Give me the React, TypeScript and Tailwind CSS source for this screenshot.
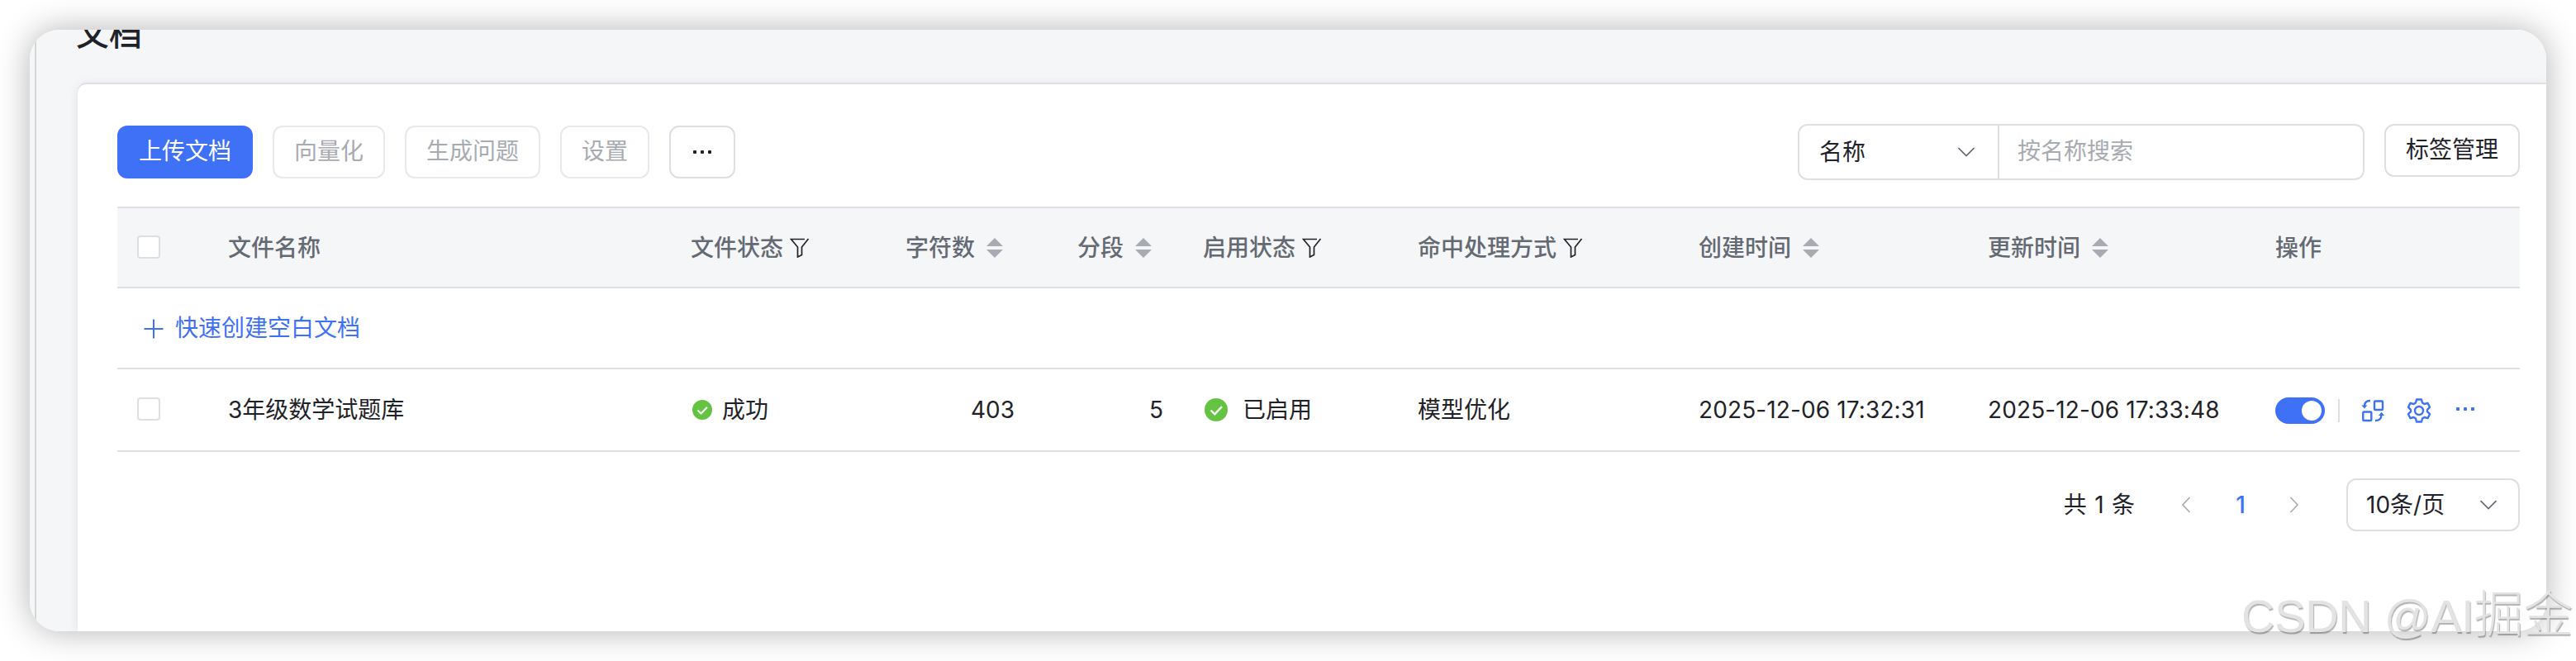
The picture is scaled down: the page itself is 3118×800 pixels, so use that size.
import type { ReactNode } from "react";

export default function App() {
  return (
    <div className="h-[800px] w-[3118px] overflow-hidden bg-white p-9 font-[Inter,'Noto_Sans_CJK_SC',sans-serif] text-[28px] leading-[44px] text-[#1f2329]">
      <div className="h-[728px] w-[3046px] rounded-[36px] shadow-[0_0_40px_rgba(0,0,0,0.3)]">
        <div className="flex h-full overflow-hidden rounded-[36px] bg-[#f5f6f8]">
          <div className="w-2 shrink-0 border-r-2 border-[#d5d6d8]" />
          <main className="flex min-w-0 flex-1 flex-col pl-[50px]">
            <h1 className="-mt-[25px] -ml-0.5 h-[91px] text-[40px] leading-[60px] font-medium">文档</h1>
            <section className="flex-1 rounded-tl-[10px] bg-white pt-12 pr-8 pl-12 shadow-[0_0_12px_rgba(31,35,41,0.1),0_-2px_0_#e6e8ec]">
              <Toolbar />
              <DocumentTable />
              <Pagination />
            </section>
          </main>
        </div>
      </div>
      <div className="absolute top-[697px] left-[2713px] font-['Liberation_Sans',sans-serif] text-[56px] leading-[84px] tracking-[-0.3px] whitespace-nowrap text-[#e3e3e3] [text-shadow:1px_2px_1px_rgba(0,0,0,0.3)]">
        CSDN @AI
        <span className="font-['Noto_Sans_CJK_SC',sans-serif] text-[60px] font-light tracking-normal">掘金</span>
      </div>
    </div>
  );
}

function Toolbar() {
  return (
    <div className="flex h-[100px] items-start justify-between">
      <div className="mt-0.5 flex gap-6">
        <button type="button" className="h-16 w-[164px] rounded-xl bg-[#3f71f7] pb-0.5 text-white">
          上传文档
        </button>
        <ToolButton className="w-[136px] pb-0.5" disabled>
          向量化
        </ToolButton>
        <ToolButton className="w-[164px] pb-0.5" disabled>
          生成问题
        </ToolButton>
        <ToolButton className="w-[108px] pb-0.5" disabled>
          设置
        </ToolButton>
        <ToolButton className="w-20">
          <Dots />
        </ToolButton>
      </div>
      <div className="flex gap-6">
        <div className="flex h-[68px] w-[686px] rounded-xl border-2 border-[#dedfe1]">
          <div className="flex w-[242px] items-center justify-between border-r-2 border-[#dedfe1] pr-7 pl-6">
            名称
            <ChevronDown />
          </div>
          <div className="flex items-center pb-0.5 pl-[22px] text-[#a8abb2]">按名称搜索</div>
        </div>
        <ToolButton className="w-[164px] pb-0.5">标签管理</ToolButton>
      </div>
    </div>
  );
}

function ToolButton({
  children,
  className,
  disabled,
}: {
  children: ReactNode;
  className: string;
  disabled?: boolean;
}) {
  return (
    <button
      type="button"
      disabled={disabled}
      className={`flex h-16 items-center justify-center rounded-xl border-2 ${disabled ? "border-[#e8e8ee] text-[#a8abb2]" : "border-[#dedfe1]"} ${className}`}
    >
      {children}
    </button>
  );
}

function DocumentTable() {
  return (
    <table className="w-[2908px] table-fixed border-separate border-spacing-0 text-left">
      <colgroup>
        <col className="w-[110px]" />
        <col className="w-[560px]" />
        <col className="w-[260px]" />
        <col className="w-[180px]" />
        <col className="w-[180px]" />
        <col className="w-[260px]" />
        <col className="w-[340px]" />
        <col className="w-[350px]" />
        <col className="w-[348px]" />
        <col className="w-[320px]" />
      </colgroup>
      <thead>
        <tr className="h-[99px] bg-[#f5f6f8] [&>th]:border-y-2 [&>th]:border-[#dfe0e4]">
          <th className="pb-px pl-6">
            <Checkbox />
          </th>
          <HeadCell>文件名称</HeadCell>
          <HeadCell icon={<FilterIcon />}>文件状态</HeadCell>
          <HeadCell icon={<SortIcon />} alignRight>
            字符数
          </HeadCell>
          <HeadCell icon={<SortIcon />} alignRight>
            分段
          </HeadCell>
          <HeadCell icon={<FilterIcon />}>启用状态</HeadCell>
          <HeadCell icon={<FilterIcon />}>命中处理方式</HeadCell>
          <HeadCell icon={<SortIcon />}>创建时间</HeadCell>
          <HeadCell icon={<SortIcon />}>更新时间</HeadCell>
          <HeadCell>操作</HeadCell>
        </tr>
      </thead>
      <tbody>
        <tr className="h-[98px] [&>td]:border-b-2 [&>td]:border-[#dfe0e4]">
          <td colSpan={10} className="pl-8">
            <div className="flex items-center gap-[14px] text-[#3f71f7]">
              <svg className="mt-0.5 size-6" viewBox="0 0 24 24" stroke="currentColor" strokeWidth="2">
                <path d="M12 0.5v23M0.5 12h23" />
              </svg>
              快速创建空白文档
            </div>
          </td>
        </tr>
        <tr className="h-[100px] [&>td]:border-b-2 [&>td]:border-[#dfe0e4]">
          <td className="pb-0.5 pl-6">
            <Checkbox />
          </td>
          <td className="px-6">3年级数学试题库</td>
          <td className="px-6">
            <div className="flex items-center gap-3 pl-0.5">
              <CheckCircle className="size-6" />
              成功
            </div>
          </td>
          <td className="px-6 text-right">403</td>
          <td className="px-6 text-right">5</td>
          <td className="px-6">
            <div className="flex items-center gap-[18px] pl-0.5">
              <CheckCircle className="size-7" />
              已启用
            </div>
          </td>
          <td className="px-6">模型优化</td>
          <td className="px-6 tracking-[0.12px] whitespace-nowrap">2025-12-06 17:32:31</td>
          <td className="px-6 tracking-[0.12px] whitespace-nowrap">2025-12-06 17:33:48</td>
          <td className="px-6 pt-0.5">
            <RowActions />
          </td>
        </tr>
      </tbody>
    </table>
  );
}

function HeadCell({
  children,
  icon,
  alignRight,
}: {
  children: ReactNode;
  icon?: ReactNode;
  alignRight?: boolean;
}) {
  return (
    <th className="pt-px pl-6 font-medium whitespace-nowrap text-[#646a73]">
      <div className={`flex items-center ${alignRight ? "justify-end pr-[38px]" : ""}`}>
        {children}
        {icon}
      </div>
    </th>
  );
}

function RowActions() {
  return (
    <div className="flex items-center text-[#3f71f7]">
      <div className="flex h-8 w-[60px] items-center justify-end rounded-full bg-[#3f71f7] pr-1">
        <div className="size-6 rounded-full bg-white" />
      </div>
      <div className="mx-4 h-7 w-0.5 bg-[#dedfe1]" />
      <svg
        className="ml-2.5 size-7"
        viewBox="0 0 28 28"
        fill="none"
        stroke="currentColor"
        strokeWidth="2.4"
      >
        <rect x="16" y="2.500" width="10" height="10.500" rx="1" />
        <rect x="2.300" y="15.500" width="10" height="10.500" rx="1" />
        <path d="M11 2C7 2 4 4 4 8.500M17 26c4 0 7.500-2 7.500-6.500" />
        <path d="M0.300 7.500h7.200L3.900 11.500zM21 20h7.200l-3.600-4.200z" fill="currentColor" stroke="none" />
      </svg>
      <svg
        className="ml-7 h-[30px] w-7"
        viewBox="0 0 28 30"
        fill="none"
        stroke="currentColor"
        strokeWidth="2.4"
        strokeLinejoin="round"
      >
        <path d="M11 1.500h6l1 4 2.500 1.500 4-1.200 2.500 5-3 3v2.400l3 3-2.500 5-4-1.200-2.500 1.500-1 4h-6l-1-4L7.500 23l-4 1.200-2.500-5 3-3v-2.400l-3-3 2.500-5 4 1.200L10 5.500z" />
        <circle cx="14" cy="15" r="5" />
      </svg>
      <div className="ml-[30px] -mt-1">
        <Dots />
      </div>
    </div>
  );
}

function Pagination() {
  return (
    <div className="mt-8 flex h-16 items-center justify-end">
      <span className="[word-spacing:1.5px]">共 1 条</span>
      <svg className="ml-[56px] h-5 w-3" viewBox="0 0 12 20" fill="none" stroke="#a8abb2" strokeWidth="1.6">
        <path d="M10.500 1 2 10l8.500 9" />
      </svg>
      <span className="ml-[52px] w-4 text-center font-medium text-[#3f71f7]">1</span>
      <svg className="ml-[51px] h-5 w-3" viewBox="0 0 12 20" fill="none" stroke="#a8abb2" strokeWidth="1.6">
        <path d="M1.500 1 10 10l-8.500 9" />
      </svg>
      <div className="ml-[57px] flex h-16 w-[210px] items-center justify-between rounded-xl border-2 border-[#dedfe1] pr-[26px] pl-[22px]">
        10条/页
        <ChevronDown />
      </div>
    </div>
  );
}

function Checkbox() {
  return <div className="size-7 rounded-[4px] border-2 border-[#dedfe1] bg-white" />;
}

function Dots() {
  return (
    <svg className="h-1 w-6" viewBox="0 0 24 4" fill="currentColor">
      <rect x="1" width="4" height="4" rx="1" />
      <rect x="10" width="4" height="4" rx="1" />
      <rect x="19" width="4" height="4" rx="1" />
    </svg>
  );
}

function ChevronDown() {
  return (
    <svg className="h-3 w-5" viewBox="0 0 20 12" fill="none" stroke="#646a73" strokeWidth="1.7">
      <path d="M0.500 1 10 10.500 19.500 1" />
    </svg>
  );
}

function FilterIcon() {
  return (
    <svg className="ml-2 size-6" viewBox="0 0 24 24" fill="none" stroke="#1f2329" strokeWidth="1.7">
      <path d="M18 1.500H1.500L9.500 11v12l5-2.500V11L22.500 1" />
    </svg>
  );
}

function SortIcon() {
  return (
    <svg className="ml-3.5 h-6 w-5" viewBox="0 0 20 24" fill="#a8abb2">
      <path d="M10 0l10 10H0zM10 24 0 14h20z" />
    </svg>
  );
}

function CheckCircle({ className }: { className: string }) {
  return (
    <svg className={className} viewBox="0 0 24 24">
      <circle cx="12" cy="12" r="12" fill="#64c343" />
      <path d="M6.500 12.500l4 4 7.500-7.800" fill="none" stroke="white" strokeWidth="2" />
    </svg>
  );
}
